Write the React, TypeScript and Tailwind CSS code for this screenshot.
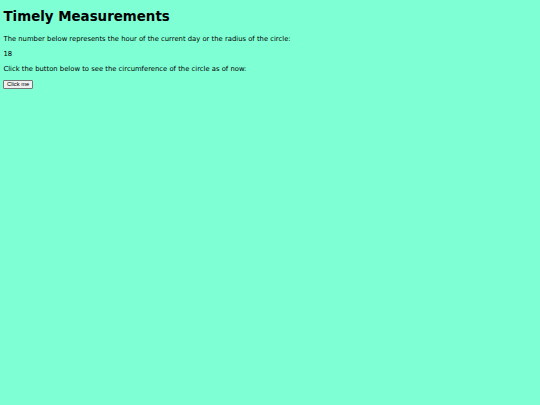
export default function App() {
  return (
    <div className="min-h-[405px] w-full bg-[#7fffd4] px-[3.47px] pt-[9.29px] text-black" style={{ fontFamily: '"DejaVu Sans", Verdana, sans-serif' }}>
      <h1 className="text-[13.4px] font-bold leading-[16.14px]">Timely Measurements</h1>
      <div className="mt-[9.29px] flex flex-col gap-[6.93px] text-[6.82px] leading-[8.07px]">
        <p>The number below represents the hour of the current day or the radius of the circle:</p>
        <p>18</p>
        <p>Click the button below to see the circumference of the circle as of now:</p>
      </div>
      <button className="mt-[6.93px] flex h-[9.1px] items-center rounded-[1px] border-[0.87px] border-[#767676] bg-[#efefef] px-[2.6px] text-[5.78px] leading-[7px]" style={{ fontFamily: '"Liberation Sans", Arial, sans-serif' }}>Click me</button>
    </div>
  );
}
